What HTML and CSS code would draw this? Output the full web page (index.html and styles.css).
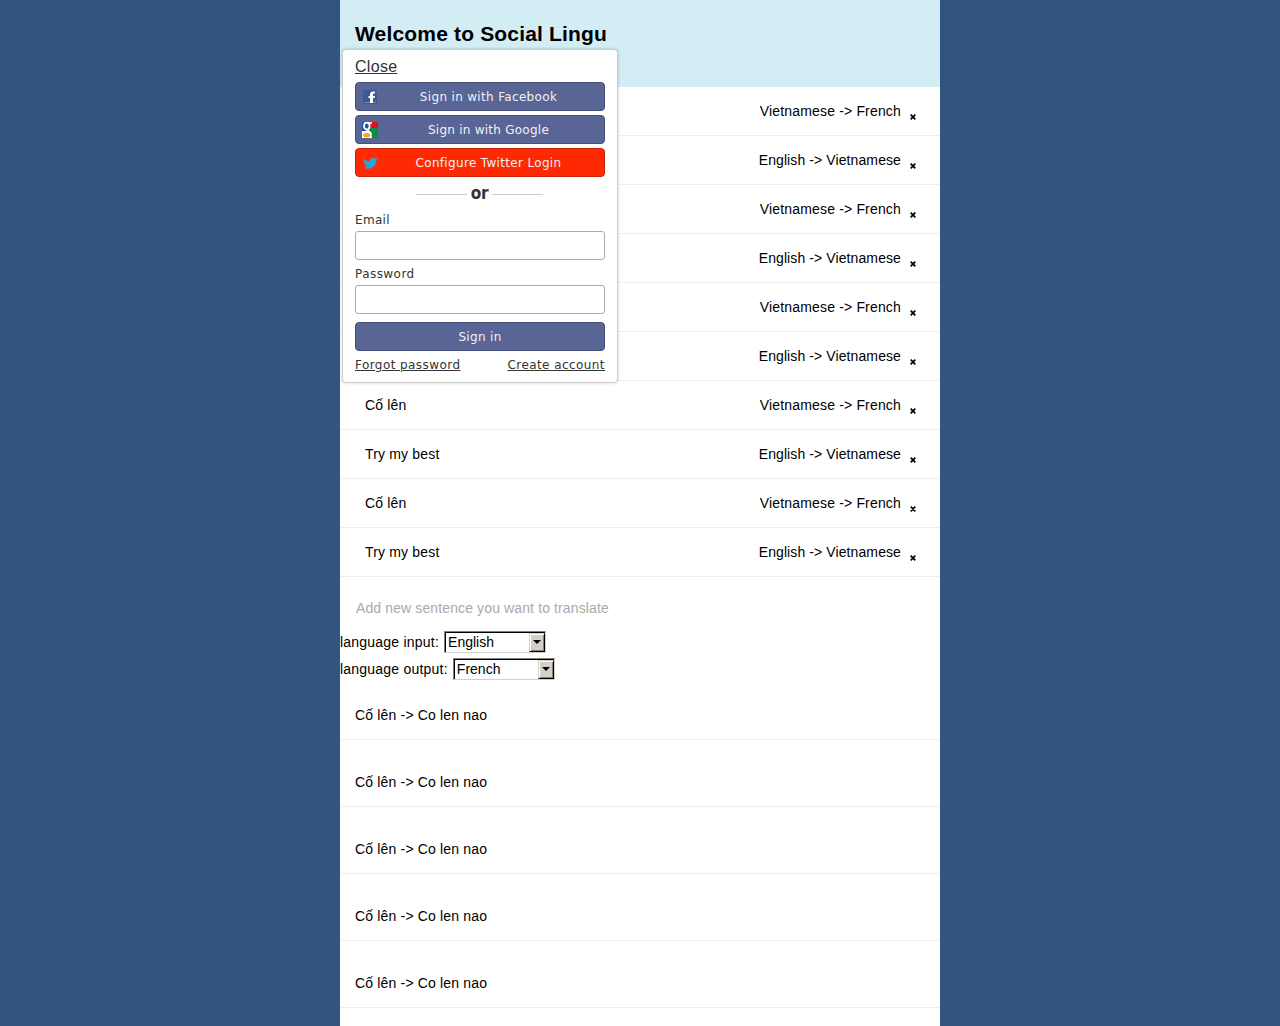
FILE: index.html
```html
<!DOCTYPE html>
<html lang="en">
<head>
<meta charset="utf-8">
<title>Social Lingu</title>
<link rel="stylesheet" href="styles.css">
</head>
<body>
<div class="container">
  <header class="header">
    <h1 class="title">Welcome to Social Lingu</h1>
    <section class="login">
      <a class="close">Close</a>
      <div class="button">
        <svg class="icon" viewBox="0 0 16 16"><path fill="#3b5998" d="M1 1h14v14H1z"/><path fill="#6f8bbd" d="M2 13h12v1H2z"/><path fill="#fff" d="M8 14V9H6.500V7H8V5.500C8 3.500 9 2.500 11 2.500h2v2h-1c-.8 0-1 .4-1 1V7h2l-.4 2H11v5z"/></svg>
        <span class="provider">Sign in with Facebook</span>
      </div>
      <div class="button">
        <svg class="icon" viewBox="0 0 16 16"><path fill="#1b55b0" d="M0 0h9v9H0z"/><path fill="#d9131b" d="M8 0h8v6H8z"/><path fill="#0a8d43" d="M8 6h8v10H8z"/><path fill="#fff" d="M0 9h5l4 1 1 6H0z"/><ellipse cx="4.800" cy="4" rx="2.800" ry="3.500" fill="#1b55b0" stroke="#fff" stroke-width="1.800"/><path d="M6 1h4" stroke="#fff" stroke-width="1.600"/><path d="M5 7.500c0 2 4 2 4 5" fill="none" stroke="#fff" stroke-width="2"/><ellipse cx="4.600" cy="13.200" rx="3.500" ry="2.200" fill="#f4a81c"/></svg>
        <span class="provider google">Sign in with Google</span>
      </div>
      <div class="button danger">
        <svg class="icon" viewBox="0 0 16 16"><path fill="#1da9e6" stroke="#6c8a98" stroke-width=".4" d="M2 4c1.500 1.700 3.500 2.500 6 2.500C8 4.500 9 3 11 3c1 0 1.500.3 2 .8l1.800-.6L14 4.500l1.300-.1L14 6c0 4.500-3.500 7.500-8 7.500-2 0-3.300-.4-4.300-1 1.500 0 2.800-.3 3.800-1.100-1.400 0-2.200-.8-2.600-1.800h1.200C2.600 9.200 1.900 8.200 1.900 7l1.100.3C1.800 6.300 1.500 5.200 2 4z"/></svg>
        <span class="provider">Configure Twitter Login</span>
      </div>
      <div class="or"><span class="rule"></span><b class="or-text">or</b><span class="rule"></span></div>
      <label class="label">Email</label>
      <input class="field" type="text">
      <label class="label pass">Password</label>
      <input class="field" type="password">
      <div class="button submit">Sign in</div>
      <div class="links"><a class="link">Forgot password</a><a class="link">Create account</a></div>
    </section>
  </header>
  <ul class="sentences">
    <li class="row"><span class="text"></span><span class="vf">Vietnamese -&gt; French</span><svg class="x" viewBox="0 0 6 6"><path d="M.7.7l4.600 4.600M5.300.7L.7 5.300"/></svg></li>
    <li class="row"><span class="text"></span><span class="ev">English -&gt; Vietnamese</span><svg class="x" viewBox="0 0 6 6"><path d="M.7.7l4.600 4.600M5.300.7L.7 5.300"/></svg></li>
    <li class="row"><span class="text"></span><span class="vf">Vietnamese -&gt; French</span><svg class="x" viewBox="0 0 6 6"><path d="M.7.7l4.600 4.600M5.300.7L.7 5.300"/></svg></li>
    <li class="row"><span class="text"></span><span class="ev">English -&gt; Vietnamese</span><svg class="x" viewBox="0 0 6 6"><path d="M.7.7l4.600 4.600M5.300.7L.7 5.300"/></svg></li>
    <li class="row"><span class="text"></span><span class="vf">Vietnamese -&gt; French</span><svg class="x" viewBox="0 0 6 6"><path d="M.7.7l4.600 4.600M5.300.7L.7 5.300"/></svg></li>
    <li class="row"><span class="text"></span><span class="ev">English -&gt; Vietnamese</span><svg class="x" viewBox="0 0 6 6"><path d="M.7.7l4.600 4.600M5.300.7L.7 5.300"/></svg></li>
    <li class="row"><span class="text">Cố lên</span><span class="vf">Vietnamese -&gt; French</span><svg class="x" viewBox="0 0 6 6"><path d="M.7.7l4.600 4.600M5.300.7L.7 5.300"/></svg></li>
    <li class="row"><span class="text">Try my best</span><span class="ev">English -&gt; Vietnamese</span><svg class="x" viewBox="0 0 6 6"><path d="M.7.7l4.600 4.600M5.300.7L.7 5.300"/></svg></li>
    <li class="row"><span class="text">Cố lên</span><span class="vf">Vietnamese -&gt; French</span><svg class="x" viewBox="0 0 6 6"><path d="M.7.7l4.600 4.600M5.300.7L.7 5.300"/></svg></li>
    <li class="row"><span class="text">Try my best</span><span class="ev">English -&gt; Vietnamese</span><svg class="x" viewBox="0 0 6 6"><path d="M.7.7l4.600 4.600M5.300.7L.7 5.300"/></svg></li>
  </ul>
  <div class="new">Add new sentence you want to translate</div>
  <div class="language"><span class="lang">language input:</span><div class="select"><span class="value">English</span><span class="arrow"></span></div></div>
  <div class="language"><span class="lang">language output:</span><div class="select"><span class="value">French</span><span class="arrow"></span></div></div>
  <ul class="results">
    <li class="result">Cố lên -&gt; Co len nao</li>
    <li class="result">Cố lên -&gt; Co len nao</li>
    <li class="result">Cố lên -&gt; Co len nao</li>
    <li class="result">Cố lên -&gt; Co len nao</li>
    <li class="result">Cố lên -&gt; Co len nao</li>
  </ul>
</div>
</body>
</html>
```
FILE: styles.css
```css
* { box-sizing: border-box; }
body {
  margin: 0;
  background: #315481;
  color: #000;
  font: 14px/20px "Liberation Sans", Arial, sans-serif;
  letter-spacing: .17px;
}
ul { list-style: none; margin: 0; padding: 0; }
.container { width: 600px; height: 1026px; margin: 0 auto; background: #fff; overflow: hidden; }
.header { position: relative; height: 87px; padding: 22px 15px 0; background: #d2edf4; }
.title { margin: 0; font-size: 21px; line-height: 24px; letter-spacing: .17px; white-space: nowrap; }

.login {
  position: absolute;
  z-index: 1;
  left: 2px;
  top: 49px;
  width: 276px;
  height: 334px;
  padding: 7px 12px 0;
  display: flex;
  flex-direction: column;
  background: #fff;
  border: 1px solid #ccc;
  border-radius: 4px;
  box-shadow: 0 0 3px rgba(0, 0, 0, .2);
  color: #333;
  font: 12px/19px "DejaVu Sans", sans-serif;
  letter-spacing: .33px;
}
.close { font: 16px/20px "Liberation Sans", Arial, sans-serif; letter-spacing: .3px; text-decoration: underline; margin-bottom: 5px; }
.button {
  display: flex;
  align-items: center;
  height: 29px;
  flex: none;
  margin-bottom: 4px;
  padding: 0 6px;
  color: #f0f1f6;
  background: #596595;
  border: 1px solid #464f7a;
  border-radius: 4px;
}
.danger { background: #ff2a04; border-color: #c9230a; }
.icon { width: 16px; height: 16px; flex: none; }
.provider { flex: 1; padding: 2px 0 0 1px; text-align: center; }
.google { letter-spacing: .25px; }
.or { display: flex; align-items: center; justify-content: center; gap: 4px; height: 25px; padding: 1px 1px 0 0; }
.rule { width: 51px; height: 1px; background: #ccc; }
.or-text { font-size: 17px; font-stretch: condensed; letter-spacing: -.4px; margin-top: -2px; }
.label { height: 25px; padding-top: 5px; }
.pass { letter-spacing: .45px; }
.field { height: 29px; flex: none; padding: 0 4px; border: 1px solid #aaa; border-radius: 3px; background: #fff; font: inherit; }
.submit { justify-content: center; margin: 8px 0 4px; padding-top: 2px; }
.links { display: flex; justify-content: space-between; padding-top: 1px; letter-spacing: .43px; }
.link { text-decoration: underline; }

.row { display: flex; align-items: center; height: 49px; padding: 0 23px 0 25px; border-bottom: 1px solid #eee; }
.text { flex: 1; }
.ev { letter-spacing: .1px; }
.x { width: 6px; height: 6px; margin: 11px 1px 0 9px; fill: none; stroke: #000; stroke-width: 1.7; }
.new { height: 51px; padding: 21px 16px 0; color: #aaa; letter-spacing: .12px; }
.language { display: flex; align-items: center; height: 27px; gap: 5px; }
.lang { letter-spacing: .22px; }
.select {
  display: flex;
  width: 102px;
  height: 22px;
  border: 1px solid;
  border-color: #808080 #d4d0c8 #d4d0c8 #808080;
  box-shadow: inset 1px 1px #000;
}
.value { flex: 1; padding-left: 3px; letter-spacing: 0; }
.arrow {
  display: flex;
  align-items: center;
  justify-content: center;
  width: 16px;
  height: 19px;
  margin-top: 1px;
  background: #d4d0c8;
  border: 1px solid;
  border-color: #d4d0c8 #000 #000 #d4d0c8;
  box-shadow: inset 1px 1px #fff, inset -1px -1px #808080;
}
.arrow::before { content: ""; border: 4px solid transparent; border-top-color: #000; border-bottom: 0; }
.results { display: flex; flex-direction: column; gap: 18px; padding-top: 9px; }
.result { height: 49px; padding: 14px 15px; border-bottom: 1px solid #eee; }
```
